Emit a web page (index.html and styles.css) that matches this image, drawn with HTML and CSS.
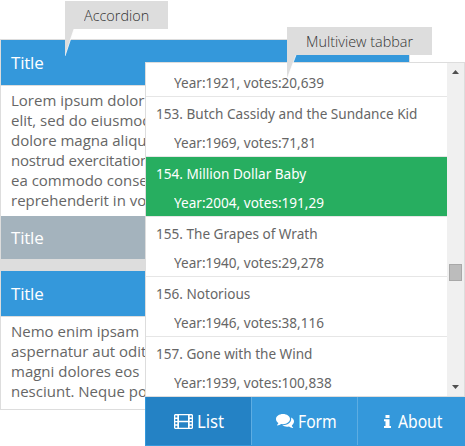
FILE: index.html
```html
<!DOCTYPE html>
<html lang="en">
<head>
<meta charset="utf-8">
<title>Accordion and multiview</title>
<link rel="stylesheet" href="styles.css">
</head>
<body>
<main class="stage">
  <section class="accordion">
    <h2 class="head">Title</h2>
    <div class="body body-first">Lorem ipsum dolor<br>elit, sed do eiusmod<br>dolore magna aliqu<br><span class="tight">nostrud exercitation</span><br>ea commodo conse<br>reprehenderit in vo</div>
    <h2 class="head head-muted">Title</h2>
    <div class="gap"></div>
    <h2 class="head">Title</h2>
    <div class="body body-last">Nemo enim ipsam<br>aspernatur aut odit<br>magni dolores eos<br>nesciunt. Neque po</div>
  </section>

  <section class="multiview">
    <div class="view">
      <div class="list">
        <div class="row"><div class="name"></div><div class="meta">Year:1921, votes:20,639</div></div>
        <div class="row"><div class="name">153. Butch Cassidy and the Sundance Kid</div><div class="meta">Year:1969, votes:71,81</div></div>
        <div class="row selected"><div class="name">154. Million Dollar Baby</div><div class="meta">Year:2004, votes:191,29</div></div>
        <div class="row"><div class="name">155. The Grapes of Wrath</div><div class="meta">Year:1940, votes:29,278</div></div>
        <div class="row"><div class="name">156. Notorious</div><div class="meta">Year:1946, votes:38,116</div></div>
        <div class="row"><div class="name">157. Gone with the Wind</div><div class="meta">Year:1939, votes:100,838</div></div>
      </div>
      <div class="scrollbar">
        <svg width="7" height="4" viewBox="0 0 7 4"><path d="M0 4 3.500 0 7 4z" fill="#505050"/></svg>
        <div class="thumb"></div>
        <svg class="down" width="7" height="4" viewBox="0 0 7 4"><path d="M0 0h7L3.500 4z" fill="#505050"/></svg>
      </div>
    </div>
    <nav class="tabs">
      <div class="tab active">
        <svg width="19" height="15" viewBox="0 0 19 15"><path fill="#fff" fill-rule="evenodd" d="M1 0h17l1 1v13l-1 1H1l-1-1V1zM1.300 1.500v2h2v-2zm0 3.400v2h2v-2zm0 3.400v2h2v-2zm0 3.400v2h2v-2zM5 1.300v5.500h9V1.300zm0 6.900v5.500h9V8.200zM15.700 1.500v2h2v-2zm0 3.400v2h2v-2zm0 3.400v2h2v-2zm0 3.400v2h2v-2z"/></svg>
        <span>List</span>
      </div>
      <div class="tab form">
        <svg width="18" height="14" viewBox="0 0 18 14"><path fill="#fff" d="M7 0c3.900 0 7 2.300 7 5.100s-3.100 5.100-7 5.100l-1.800-.2c-1.100.8-2.400 1.300-4 1.400l-.2-.4c.8-.6 1.200-1.200 1.400-2C.9 8.100 0 6.700 0 5.100 0 2.300 3.100 0 7 0z"/><path fill="#fff" d="M15.100 3.500C17 4.400 18 5.900 18 7.600c0 1.500-.8 2.800-2.200 3.800.2.900.7 1.500 1.400 2.100l-.2.500c-1.600-.1-2.900-.7-4-1.500-2.400.5-5 .1-6.700-1.200 5.100.1 8.900-2.700 8.900-6.200z"/></svg>
        <span>Form</span>
      </div>
      <div class="tab about">
        <svg width="7" height="13" viewBox="0 0 7 13"><path fill="#fff" d="M1.500 0h4v3h-4zM0 4.200h5.500v6.800H7v2H0v-2h1.500V6.200H0z"/></svg>
        <span>About</span>
      </div>
    </nav>
  </section>

  <div class="callout callout-accordion"><span>Accordion</span>
    <svg width="11" height="27" viewBox="0 0 11 27"><path d="M0 0h9L0 27z" fill="#ddd"/><path d="M9 0 0 27" fill="none" stroke="#fff" stroke-width=".7"/></svg>
  </div>
  <div class="callout callout-multiview"><span>Multiview tabbar</span>
    <svg width="11" height="24" viewBox="0 0 11 24"><path d="M0 0h9L0 24z" fill="#ddd"/><path d="M9 0 0 24" fill="none" stroke="#fff" stroke-width=".7"/></svg>
  </div>
</main>
</body>
</html>
```

FILE: styles.css
```css
* { box-sizing: border-box; }

body {
  margin: 0;
  background: #fff;
  font-family: "Noto Sans", "Open Sans", sans-serif;
}

.stage {
  position: relative;
  width: 465px;
  height: 446px;
  overflow: hidden;
  padding-top: 39px;
}

.accordion {
  width: 410px;
  height: 371px;
  border: 1px solid #ddd;
  font-family: "Open Sans", sans-serif;
}

.head {
  height: 45px;
  margin: 0;
  padding-left: 10px;
  background: #3498db;
  color: #fff;
  font-size: 17px;
  font-weight: 400;
  letter-spacing: -0.2px;
  line-height: 46px;
}

.head-muted {
  height: 43px;
  background: #a4b3bd;
  line-height: 44px;
}

.body {
  width: 144px;
  border-top: 1px solid #ddd;
  padding: 4px 0 0 10px;
  color: #666;
  font-size: 15px;
  line-height: 20px;
  white-space: nowrap;
  overflow: hidden;
}

.tight { letter-spacing: -0.2px; }
.body-first { height: 131px; }
.body-last { height: 93px; }
.gap { height: 12px; background: #ddd; }

/* The multiview floats above the accordion */
.multiview {
  position: absolute;
  left: 145px;
  top: 62px;
  width: 320px;
  height: 384px;
  display: flex;
  flex-direction: column;
}

.view {
  display: flex;
  height: 335px;
  border: 1px solid #ddd;
  background: #fff;
  overflow: hidden;
}

.list { width: 301px; margin-top: -26px; }

.row {
  height: 60px;
  border-bottom: 1px solid #e6e6e6;
  padding-top: 1px;
  color: #666;
  font-size: 15px;
  white-space: nowrap;
}

/* Condensed text */
.name, .meta, .tab span, .callout span {
  transform: scaleX(0.905);
  transform-origin: 0 50%;
}

.name { height: 29px; margin-left: 10px; line-height: 30px; }
.meta { height: 28px; margin-left: 28px; line-height: 30px; }
.selected { background: #27ae60; color: #fff; background-clip: padding-box; }

.scrollbar {
  width: 17px;
  background: #f0f0f0;
  display: flex;
  flex-direction: column;
  align-items: center;
  padding: 7px 0;
}

.thumb {
  width: 13px;
  height: 17px;
  margin-top: 190px;
  border: 1px solid #a8a8a8;
  background: #bcbcbc;
}

.down { margin-top: auto; }

.tabs {
  display: grid;
  grid-template-columns: 106px 106px 108px;
  height: 49px;
  background: #3498db;
  border-bottom: 1px solid #3498db;
}

.tab {
  display: flex;
  align-items: center;
  gap: 4px;
  border-left: 1px solid #5dade2;
  padding-left: 28px;
  color: #fff;
  font-size: 18px;
}

.tab span { transform: scaleX(0.87); }
.tab.active span { transform: scaleX(0.93); }
.tab.active { background: #2482c5; border-left-color: #3498db; }
.tab.form { padding-left: 24px; }
.tab.about { padding-left: 26px; gap: 7px; }

.callout {
  position: absolute;
  height: 28px;
  background: #ddd;
  color: #333;
  font-family: "Open Sans", sans-serif;
  font-size: 15px;
  font-weight: 300;
  line-height: 29px;
  padding-left: 19px;
  white-space: nowrap;
}

.callout span { display: inline-block; transform: scaleX(0.96); }
.callout svg { position: absolute; left: 0; top: 100%; }
.callout-accordion { left: 65px; top: 1px; width: 103px; }
.callout-multiview { left: 287px; top: 27px; width: 145px; }
```
